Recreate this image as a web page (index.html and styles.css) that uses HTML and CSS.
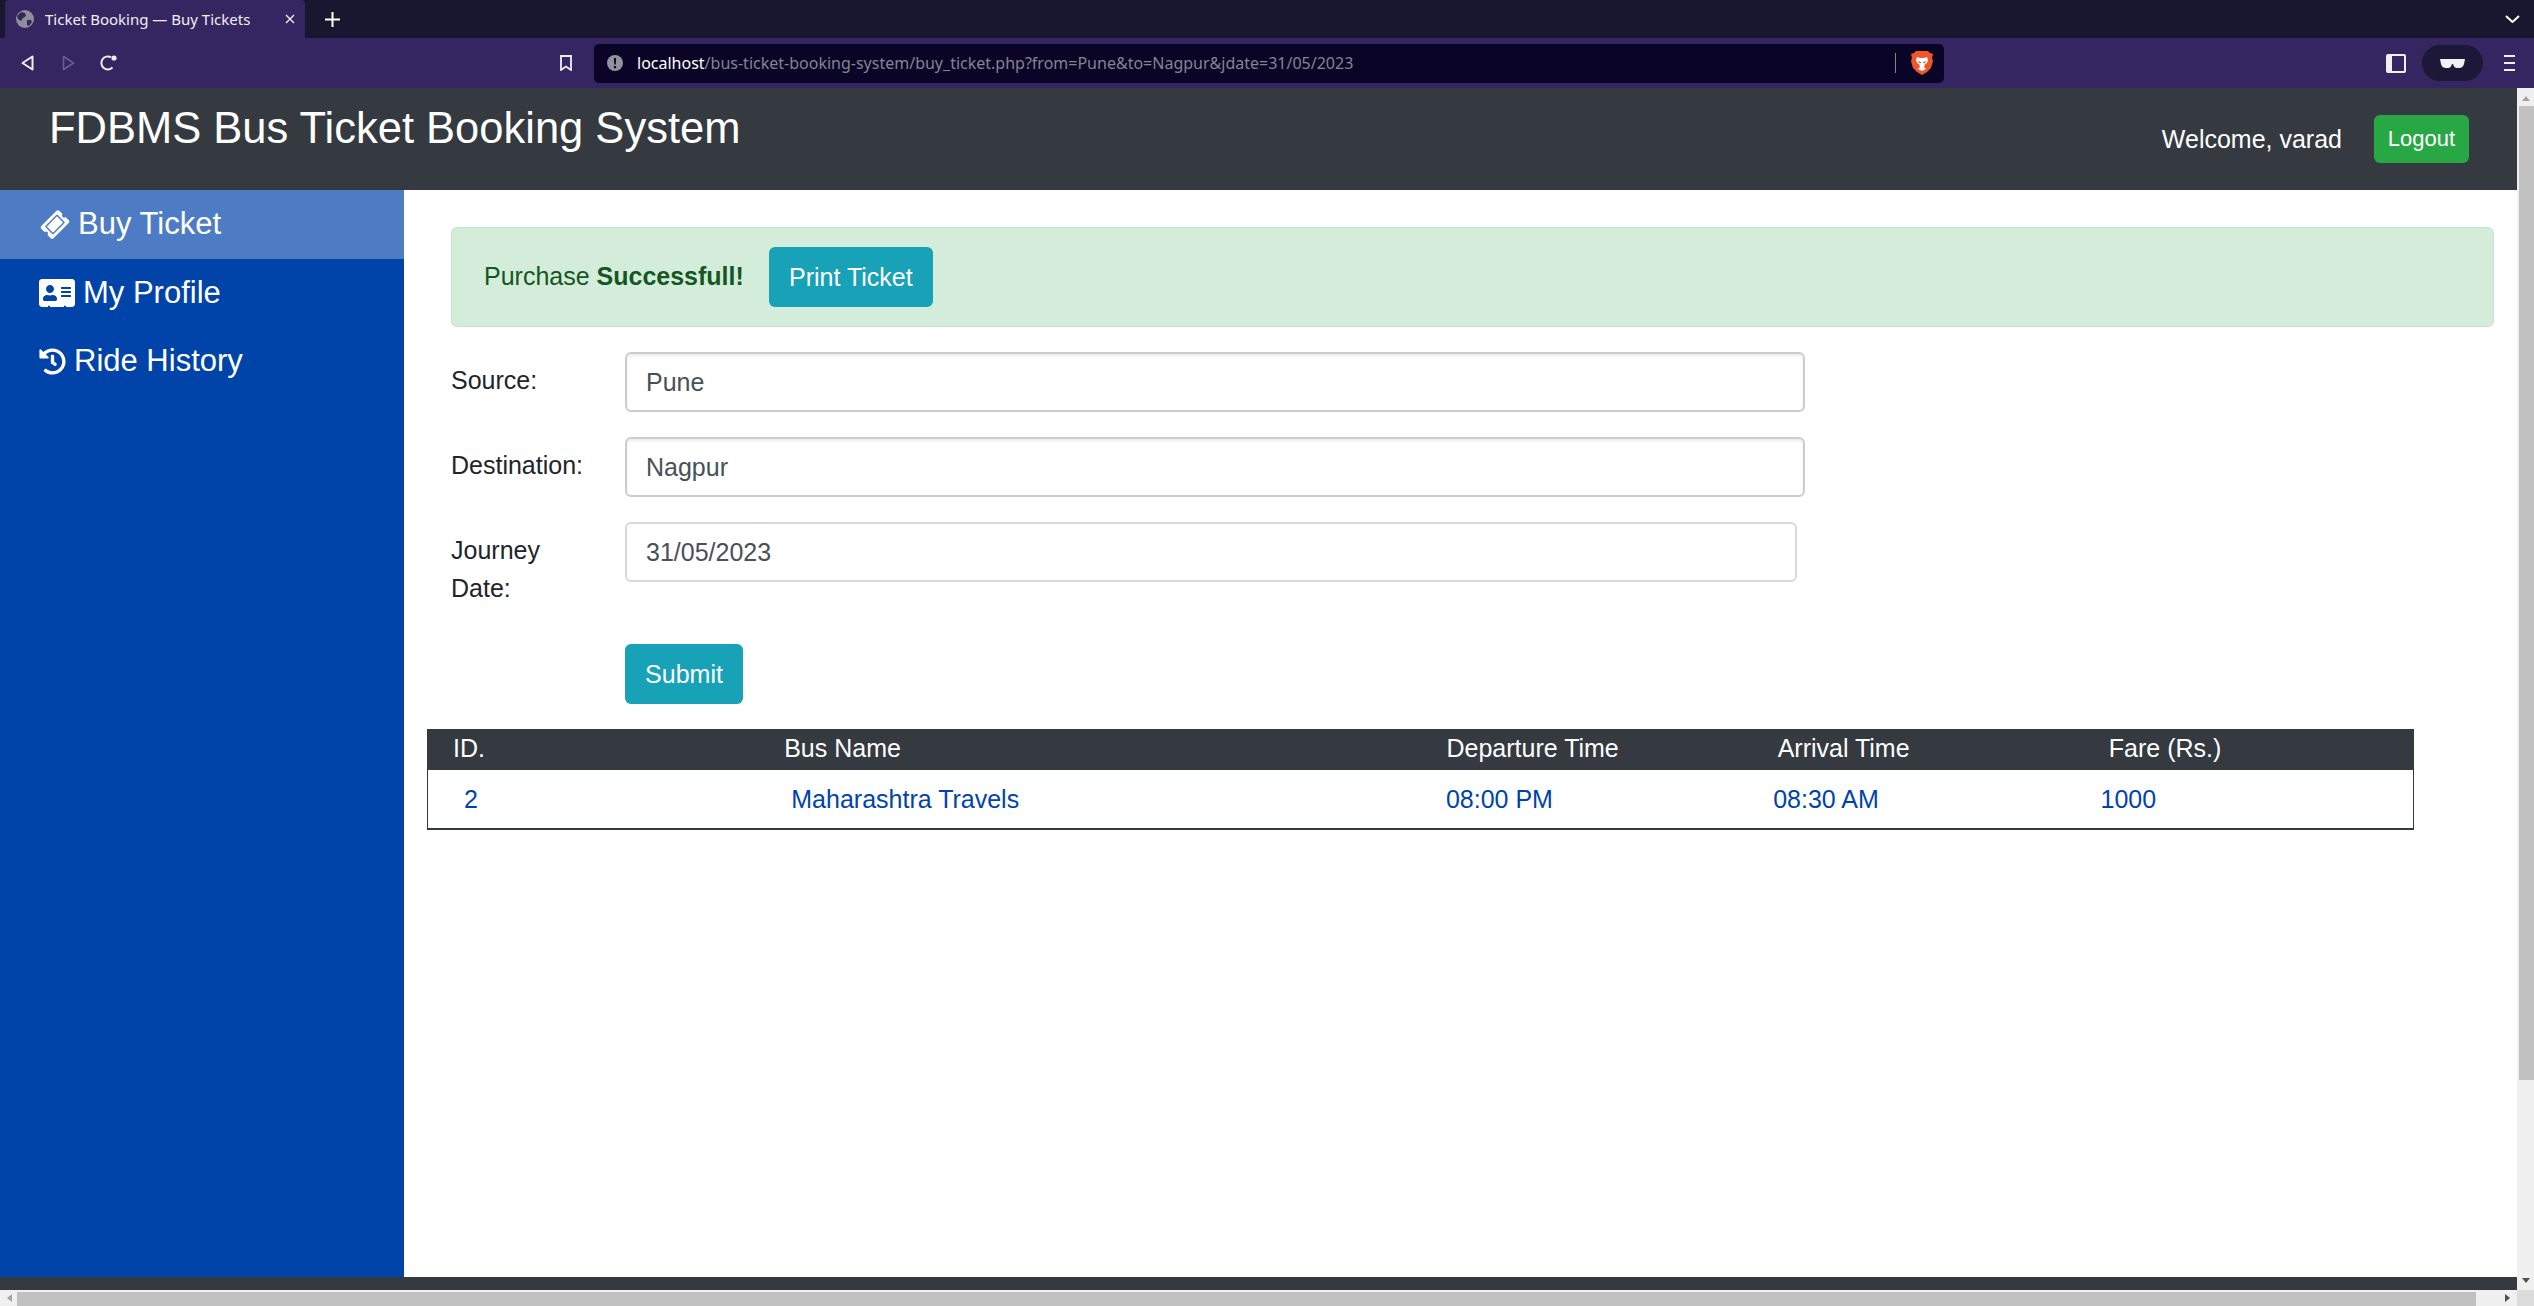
FILE: index.html
```html
<!DOCTYPE html>
<html lang="en">

<head>
    <meta charset="UTF-8">
    <meta name="viewport" content="width=device-width, initial-scale=1.0">
    <title>Ticket Booking — Buy Tickets</title>
    <link rel="stylesheet" href="styles.css">
</head>

<body>

    <!-- Browser chrome -->
    <div class="tabbar">
        <div class="tab">
            <svg class="tab-globe" viewBox="0 0 18 18">
                <circle cx="9" cy="9" r="9" fill="#8e8e99" />
                <path d="M5 2l4 1 1 3-3 2-2 3-3-2-1-3zM11 10l4 0 1 2-3 4-2-1z" fill="#352560" />
            </svg>
            <span class="tab-title">Ticket Booking — Buy Tickets</span>
            <svg class="tab-close" viewBox="0 0 10 10">
                <path d="M1 1l8 8M9 1l-8 8" stroke="#f0f0f4" stroke-width="1.4" />
            </svg>
        </div>
        <svg class="tab-new" viewBox="0 0 15 15">
            <path d="M7.5 0v15M0 7.5h15" stroke="#fff" stroke-width="2" />
        </svg>
        <svg class="tab-list" viewBox="0 0 15 8">
            <path d="M1 1l6.500 6 6.500-6" fill="none" stroke="#fff" stroke-width="2" />
        </svg>
    </div>

    <div class="toolbar">
        <svg class="tool-back" viewBox="0 0 13 16">
            <path d="M11.500 1.500v13L1.500 8z" fill="none" stroke="#f0f0f4" stroke-width="2" stroke-linejoin="round" />
        </svg>
        <svg class="tool-forward" viewBox="0 0 13 16">
            <path d="M1.500 1.500v13l10-6.500z" fill="none" stroke="#6a5f8c" stroke-width="1.6" stroke-linejoin="round" />
        </svg>
        <svg class="tool-reload" viewBox="0 0 17 16">
            <path d="M12.500 12.500A6.500 6.500 0 1 1 11 2.200" fill="none" stroke="#f0f0f4" stroke-width="2" />
            <circle cx="14" cy="3" r="2.600" fill="#f0f0f4" />
        </svg>
        <svg class="tool-bookmark" viewBox="0 0 12 16">
            <path d="M1 1h10v14l-5-3.500L1 15z" fill="none" stroke="#f0f0f4" stroke-width="1.800" />
        </svg>
        <div class="urlbar">
            <svg class="url-info" viewBox="0 0 16 16">
                <circle cx="8" cy="8" r="8" fill="#92929e" />
                <path d="M6.900 3h2.200l-.3 6.500H7.200zM6.900 11h2.200v2.200H6.900z" fill="#0a0527" />
            </svg>
            <span class="url-text"><span class="url-host">localhost</span>/bus-ticket-booking-system/buy_ticket.php?from=Pune&amp;to=Nagpur&amp;jdate=31/05/2023</span>
            <span class="url-sep"></span>
            <svg class="url-brave" viewBox="0 0 22 24">
                <path d="M5 0h12l2 2 3 1-1 4 1 3-2 7-4 4-5 3-5-3-4-4-2-7 1-3-1-4 3-1z" fill="#f0562a" />
                <path d="M6 6l3 1h4l3-1 1 3-1 3-2 1-1 3 2 2-4 2-4-2 2-2-1-3-2-1-1-3z" fill="#fff" />
                <path d="M7 10l3 1v1l-2 0zM15 10l-3 1v1l2 0z" fill="#f0562a" />
            </svg>
        </div>
        <svg class="tool-panel" viewBox="0 0 20 19">
            <rect x="0" y="0" width="20" height="19" rx="2" fill="#f0f0f4" />
            <rect x="6" y="2" width="12" height="15" fill="#352560" />
        </svg>
        <div class="private-pill">
            <svg viewBox="0 0 25 9">
                <path d="M0 0h25l-1 5q-1 4-5 4h-2q-3 0-4-4h-1q-1 4-4 4H6Q2 9 1 5z" fill="#f0f0f4" />
            </svg>
        </div>
        <div class="tool-menu"><span></span><span></span><span></span></div>
    </div>

    <!-- Page viewport -->
    <div class="viewport">
        <div class="page">
            <header class="site-header">
                <h1 class="site-title">FDBMS Bus Ticket Booking System</h1>
                <div class="user-box">
                    <span class="welcome">Welcome, varad</span>
                    <button class="btn btn-logout">Logout</button>
                </div>
            </header>

            <div class="content">
                <nav class="sidebar">
                    <a class="nav-link active" href="#">
                        <svg class="icon-ticket" viewBox="0 0 576 512">
                            <path d="M128 160h320v192H128V160zm400 96c0 26.510 21.490 48 48 48v96c0 26.510-21.490 48-48 48H48c-26.510 0-48-21.490-48-48v-96c26.510 0 48-21.490 48-48s-21.490-48-48-48v-96c0-26.510 21.490-48 48-48h480c26.510 0 48 21.490 48 48v96c-26.510 0-48 21.490-48 48zm-48-104c0-13.255-10.745-24-24-24H120c-13.255 0-24 10.745-24 24v208c0 13.255 10.745 24 24 24h336c13.255 0 24-10.745 24-24V152z" fill="#fff" />
                        </svg>
                        Buy Ticket
                    </a>
                    <a class="nav-link" href="#">
                        <svg class="icon-card" viewBox="0 0 576 512">
                            <path fill-rule="evenodd" d="M528 32H48C21.500 32 0 53.500 0 80v352c0 26.500 21.500 48 48 48h96v-20h32v20h224v-20h32v20h96c26.500 0 48-21.500 48-48V80c0-26.500-21.500-48-48-48zm-352 96c35.300 0 64 28.700 64 64s-28.700 64-64 64-64-28.700-64-64 28.700-64 64-64zm112 236.800c0 10.600-10 19.200-22.400 19.200H86.400C74 384 64 375.400 64 364.800v-19.200c0-31.800 30.100-57.600 67.200-57.600h5c12.300 5.100 25.700 8 39.800 8s27.600-2.900 39.800-8h5c37.100 0 67.200 25.800 67.200 57.600v19.200zM512 312c0 4.400-3.600 8-8 8H360c-4.400 0-8-3.600-8-8v-16c0-4.400 3.600-8 8-8h144c4.400 0 8 3.600 8 8v16zm0-64c0 4.400-3.600 8-8 8H360c-4.400 0-8-3.600-8-8v-16c0-4.400 3.600-8 8-8h144c4.400 0 8 3.600 8 8v16zm0-64c0 4.400-3.600 8-8 8H360c-4.400 0-8-3.600-8-8v-16c0-4.400 3.600-8 8-8h144c4.400 0 8 3.600 8 8v16z" fill="#fff" />
                        </svg>
                        My Profile
                    </a>
                    <a class="nav-link" href="#">
                        <svg class="icon-history" viewBox="0 0 512 512">
                            <path d="M504 255.531c.253 136.640-111.180 248.372-247.820 248.468-59.015.042-113.223-20.530-155.822-54.911-11.077-8.940-11.905-25.541-1.839-35.607l11.267-11.267c8.609-8.609 22.353-9.551 31.891-1.984C173.062 425.135 212.781 440 256 440c101.705 0 184-82.311 184-184 0-101.705-82.311-184-184-184-48.814 0-93.149 18.969-126.068 49.932l50.754 50.754c10.080 10.080 2.941 27.314-11.313 27.314H24c-8.837 0-16-7.163-16-16V38.627c0-14.254 17.234-21.393 27.314-11.314l49.372 49.372C129.209 34.136 189.552 8 256 8c136.810 0 247.747 110.780 248 247.531zm-180.912 78.784l9.823-12.630c8.138-10.463 6.253-25.542-4.210-33.679L288 256.349V152c0-13.255-10.745-24-24-24h-16c-13.255 0-24 10.745-24 24v135.651l65.409 50.874c10.463 8.137 25.541 6.253 33.679-4.210z" fill="#fff" />
                        </svg>
                        Ride History
                    </a>
                </nav>

                <main class="main">
                    <div class="alert-success">
                        <span>Purchase <strong>Successfull!</strong></span>
                        <button class="btn btn-info btn-print">Print Ticket</button>
                    </div>

                    <form class="buy-form">
                        <div class="form-row">
                            <label for="source">Source:</label>
                            <input class="field field-select" id="source" type="text" value="Pune">
                        </div>
                        <div class="form-row">
                            <label for="destination">Destination:</label>
                            <input class="field field-select" id="destination" type="text" value="Nagpur">
                        </div>
                        <div class="form-row form-row-date">
                            <label for="jdate">Journey<br>Date:</label>
                            <input class="field field-date" id="jdate" type="text" value="31/05/2023">
                        </div>
                        <div class="form-row form-row-submit">
                            <span></span>
                            <button class="btn btn-info btn-submit" type="button">Submit</button>
                        </div>
                    </form>

                    <div class="results">
                        <div class="results-head">
                            <div>ID.</div>
                            <div class="wide">Bus Name</div>
                            <div>Departure Time</div>
                            <div>Arrival Time</div>
                            <div>Fare (Rs.)</div>
                        </div>
                        <div class="results-row">
                            <div>2</div>
                            <div class="wide">Maharashtra Travels</div>
                            <div>08:00 PM</div>
                            <div>08:30 AM</div>
                            <div>1000</div>
                        </div>
                    </div>
                </main>
            </div>

            <footer class="site-footer"></footer>
        </div>

        <div class="vscroll">
            <span class="arrow-up"></span>
            <div class="vscroll-thumb"></div>
            <span class="arrow-down"></span>
        </div>
    </div>

    <div class="hscroll">
        <span class="arrow-left"></span>
        <div class="hscroll-thumb"></div>
        <span class="arrow-right"></span>
        <div class="scroll-corner"></div>
    </div>

</body>

</html>
```

FILE: styles.css
```css
html,
body {
    margin: 0;
    height: 100%;
    overflow: hidden;
}

body {
    display: flex;
    flex-direction: column;
    height: 1306px;
    font-family: "Liberation Sans", Arial, sans-serif;
    font-size: 25px;
    line-height: 1.5;
    color: #212529;
    background-color: #fff;
}

svg {
    display: block;
    flex: none;
}

/* Browser chrome */
.tabbar {
    display: flex;
    align-items: center;
    height: 38px;
    padding-left: 5px;
    background-color: #191730;
}

.tab {
    display: flex;
    align-items: center;
    width: 300px;
    height: 38px;
    padding-left: 11px;
    box-sizing: border-box;
    background-color: #352560;
    border-radius: 4px 4px 0 0;
}

.tab-globe {
    width: 18px;
    height: 18px;
}

.tab-title {
    margin-left: 11px;
    width: 229px;
    font-family: "Noto Sans", sans-serif;
    font-size: 15px;
    color: #f0f0f4;
    white-space: nowrap;
}

.tab-close {
    width: 10px;
    height: 10px;
    margin-left: 11px;
}

.tab-new {
    width: 15px;
    height: 15px;
    margin-left: 20px;
}

.tab-list {
    width: 15px;
    height: 8px;
    margin-left: auto;
    margin-right: 14px;
}

.toolbar {
    display: flex;
    align-items: center;
    height: 50px;
    background-color: #352560;
}

.tool-back {
    width: 13px;
    height: 16px;
    margin-left: 21px;
}

.tool-forward {
    width: 13px;
    height: 16px;
    margin-left: 28px;
}

.tool-reload {
    width: 17px;
    height: 16px;
    margin-left: 25px;
}

.tool-bookmark {
    width: 12px;
    height: 16px;
    margin-left: 443px;
}

.urlbar {
    display: flex;
    align-items: center;
    width: 1350px;
    height: 39px;
    margin-left: 22px;
    padding-left: 13px;
    box-sizing: border-box;
    background-color: #0a0527;
    border-radius: 5px;
}

.url-info {
    width: 16px;
    height: 16px;
}

.url-text {
    margin-left: 14px;
    width: 1258px;
    font-family: "Noto Sans", sans-serif;
    font-size: 16px;
    color: #85838f;
    white-space: nowrap;
}

.url-host {
    color: #fff;
}

.url-sep {
    width: 1px;
    height: 20px;
    background-color: #85838f;
}

.url-brave {
    width: 22px;
    height: 24px;
    margin-left: 15px;
}

.tool-panel {
    width: 20px;
    height: 19px;
    margin-left: 442px;
}

.private-pill {
    display: flex;
    align-items: center;
    justify-content: center;
    width: 61px;
    height: 36px;
    margin-left: 16px;
    background-color: #1d1738;
    border-radius: 18px;
}

.private-pill svg {
    width: 25px;
    height: 9px;
}

.tool-menu {
    display: flex;
    flex-direction: column;
    gap: 5px;
    width: 11px;
    margin-left: 21px;
}

.tool-menu span {
    height: 2px;
    background-color: #f0f0f4;
}

/* Page */
.viewport {
    display: flex;
    height: 1202px;
}

.page {
    display: flex;
    flex-direction: column;
    width: 2517px;
}

.site-header {
    display: flex;
    justify-content: space-between;
    height: 102px;
    padding: 14px 48px 0 49px;
    box-sizing: border-box;
    background-color: #343a40;
    color: #fff;
}

.site-title {
    margin: 0;
    font-size: 43.500px;
    font-weight: 400;
    line-height: 1.2;
}

.user-box {
    display: flex;
    align-items: flex-start;
    padding-top: 13px;
}

.welcome {
    margin-right: 32px;
    line-height: 48px;
}

.content {
    display: flex;
    flex: 1;
}

.sidebar {
    width: 404px;
    background-color: #0044aa;
}

.nav-link {
    display: flex;
    align-items: center;
    height: 68.500px;
    padding-left: 39px;
    font-size: 31px;
    color: #fff;
    text-decoration: none;
}

.nav-link.active {
    background-color: #4e7cc4;
}

.icon-ticket {
    width: 26px;
    height: 23px;
    margin: 0 10px 0 3px;
    transform: rotate(-45deg);
}

.icon-card {
    width: 36px;
    height: 32px;
    margin-right: 8px;
}

.icon-history {
    width: 27px;
    height: 27px;
    margin-right: 8px;
}

.main {
    flex: 1;
    padding: 37px 23px 0 47px;
}

.btn {
    padding: 0;
    border: 0;
    border-radius: 6px;
    font-family: inherit;
    color: #fff;
}

.btn-logout {
    width: 95px;
    height: 48px;
    font-size: 22px;
    background-color: #28a745;
}

.btn-info {
    height: 60px;
    font-size: 25px;
    background-color: #17a2b8;
}

.btn-print {
    width: 164px;
    margin-left: 25px;
}

.btn-submit {
    width: 118px;
}

.alert-success {
    display: flex;
    align-items: center;
    height: 100px;
    padding-left: 32px;
    box-sizing: border-box;
    border: 1px solid #c3e6cb;
    border-radius: 6px;
    background-color: #d4edda;
    color: #155724;
}

.buy-form {
    margin-top: 25px;
}

.form-row {
    display: grid;
    grid-template-columns: 174px 1180px;
    margin-bottom: 25px;
}

.form-row label {
    padding-top: 10px;
}

.form-row-date {
    grid-template-columns: 174px 1172px;
    height: 97px;
}

.field {
    height: 60px;
    padding: 0 19px;
    box-sizing: border-box;
    font-family: inherit;
    font-size: 25px;
    color: #495057;
    background-color: #fff;
    border-radius: 6px;
}

.field-select {
    border: 2px solid #ccc;
    box-shadow: inset 0 2px 3px rgba(0, 0, 0, .08);
}

.field-date {
    border: 2px solid #d5d8dc;
}

.results {
    width: 1987px;
    margin-left: -24px;
}

.results-head,
.results-row {
    display: grid;
    box-sizing: border-box;
}

.results-head {
    grid-template-columns: repeat(6, 331.170px);
    height: 41px;
    padding-left: 26px;
    line-height: 38px;
    color: #fff;
    background-color: #343a40;
}

.results-row {
    grid-template-columns: repeat(6, 327.300px);
    height: 60px;
    padding-left: 36px;
    line-height: 58px;
    color: #0044aa;
    border: solid #343a40;
    border-width: 0 1px 2px 1px;
}

.wide {
    grid-column: span 2;
}

.site-footer {
    height: 13px;
    background-color: #343a40;
}

/* Scrollbars */
.vscroll {
    display: flex;
    flex-direction: column;
    align-items: flex-end;
    width: 17px;
    background-color: #f0f0f0;
}

.vscroll-thumb {
    width: 15px;
    height: 974px;
    margin-top: 5px;
    background-color: #c1c1c1;
}

.arrow-up,
.arrow-down,
.arrow-left,
.arrow-right {
    flex: none;
    width: 0;
    height: 0;
    border-style: solid;
    border-color: transparent;
}

.arrow-up {
    margin: 8px 4px 0 0;
    border-width: 0 4px 5px;
    border-bottom-color: #a3a3a3;
}

.arrow-down {
    margin: auto 4px 7px 0;
    border-width: 5px 4px 0;
    border-top-color: #505050;
}

.hscroll {
    display: flex;
    align-items: center;
    height: 16px;
    background-color: #f0f0f0;
}

.arrow-left {
    margin: 0 5px 0 7px;
    border-width: 4px 5px 4px 0;
    border-right-color: #a3a3a3;
}

.hscroll-thumb {
    align-self: flex-end;
    width: 2459px;
    height: 14px;
    background-color: #c1c1c1;
}

.arrow-right {
    margin-left: 29px;
    border-width: 4px 0 4px 5px;
    border-left-color: #505050;
}

.scroll-corner {
    align-self: stretch;
    width: 17px;
    margin-left: auto;
    background-color: #dcdcdc;
}
```
